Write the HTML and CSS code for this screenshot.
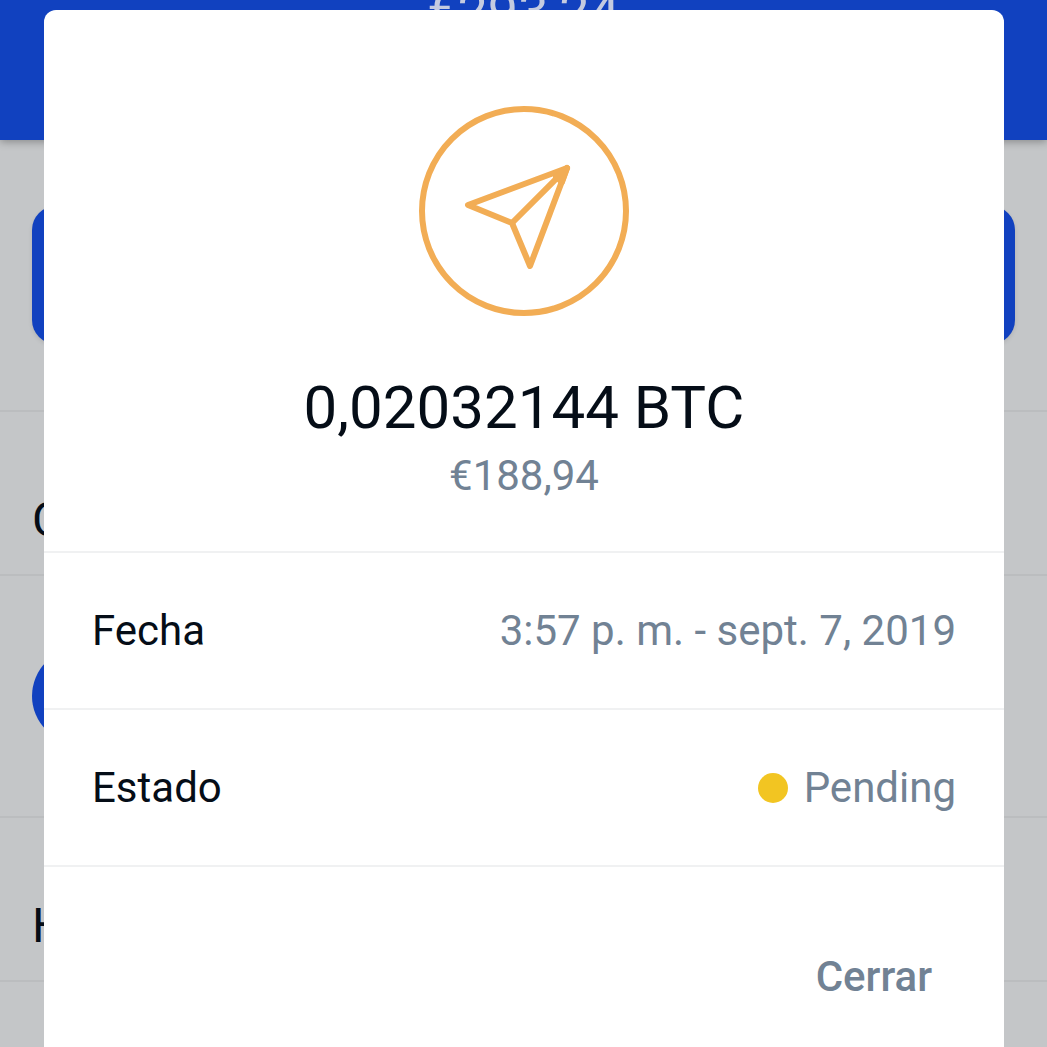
FILE: index.html
```
<!DOCTYPE html>
<html lang="es">
<head>
    <meta charset="UTF-8">
    <meta name="viewport" content="width=device-width, initial-scale=1.0">
    <title>BTC</title>
    <link rel="stylesheet" href="styles.css">
</head>
<body>
    <!-- Wallet page behind the dialog -->
    <div class="wallet" aria-hidden="true">
        <header class="wallet-header">€293,24</header>
        <div class="wallet-actions">
            <div class="wallet-button"></div>
        </div>
        <div class="wallet-heading">C</div>
        <div class="wallet-item">
            <span class="coin"></span>
        </div>
        <div class="wallet-heading">H</div>
    </div>

    <!-- Transaction dialog -->
    <main class="dialog" role="dialog" aria-labelledby="amount">
        <section class="summary">
            <svg class="send-icon" viewBox="0 0 210 210" fill="none" stroke="#f2ad55" stroke-width="6" stroke-linejoin="round" stroke-linecap="round" aria-hidden="true">
                <circle cx="105" cy="105" r="102"/>
                <path d="M148 62 L49 99 L93 117 L111 160 Z"/>
                <path d="M93 117 L148 62"/>
                <path d="M148 62 L137 71 L143 76 Z" fill="#f2ad55"/>
            </svg>
            <h1 class="amount" id="amount">0,02032144 BTC</h1>
            <p class="fiat">€188,94</p>
        </section>

        <dl class="details">
            <div class="row">
                <dt>Fecha</dt>
                <dd>3:57 p. m. - sept. 7, 2019</dd>
            </div>
            <div class="row">
                <dt>Estado</dt>
                <dd><span class="status-dot"></span>Pending</dd>
            </div>
        </dl>

        <div class="actions">
            <button type="button" class="close-button">Cerrar</button>
        </div>
    </main>
</body>
</html>
```
FILE: styles.css
```
* {
    box-sizing: border-box;
}

body {
    margin: 0;
    height: 100vh;
    overflow: hidden;
    background-color: #c4c6c8;
    color: #050d17;
    font-family: Roboto, sans-serif;
    font-size: 42px;
    line-height: 56px;
}

/* Wallet page */
.wallet-header {
    height: 140px;
    background-color: #1141bf;
    color: #c4cbe0;
    font-size: 54px;
    line-height: 24px;
    text-align: center;
    box-shadow: 0 2px 8px rgba(0, 0, 0, 0.3);
}

.wallet-actions {
    padding: 66px 32px;
    border-bottom: 2px solid #bbbdbf;
}

.wallet-button {
    height: 138px;
    border-radius: 24px;
    background-color: #1141bf;
    box-shadow: 0 2px 4px rgba(0, 0, 0, 0.1);
}

.wallet-heading {
    padding: 80px 32px 26px;
    border-bottom: 2px solid #bbbdbf;
    font-size: 48px;
}

.wallet-item {
    display: flex;
    padding: 72px 32px;
    border-bottom: 2px solid #bbbdbf;
}

.coin {
    width: 96px;
    height: 96px;
    border-radius: 50%;
    background-color: #1141bf;
}

/* Dialog */
.dialog {
    position: fixed;
    top: 10px;
    right: 43px;
    bottom: 0;
    left: 44px;
    border-radius: 12px 12px 0 0;
    background-color: #fff;
}

.summary {
    display: flex;
    flex-direction: column;
    align-items: center;
    padding: 96px 48px 47px;
    border-bottom: 2px solid #f0f1f2;
}

.send-icon {
    width: 210px;
    height: 210px;
}

.amount {
    margin: 56px 0 0;
    font-size: 60px;
    font-weight: 400;
    line-height: 72px;
}

.fiat {
    margin: 4px 0 0;
    color: #718294;
}

.details {
    margin: 0;
}

.row {
    display: flex;
    justify-content: space-between;
    padding: 50px 48px 49px;
    border-bottom: 2px solid #f0f1f2;
}

.row dd {
    display: flex;
    align-items: center;
    gap: 16px;
    margin: 0;
    color: #718294;
}

.status-dot {
    width: 30px;
    height: 30px;
    border-radius: 50%;
    background-color: #f2c522;
}

.actions {
    display: flex;
    justify-content: flex-end;
    padding: 72px 48px 32px;
}

.close-button {
    padding: 10px 24px;
    border: none;
    background: none;
    color: #718294;
    font: inherit;
    font-weight: 500;
    cursor: pointer;
}
```
